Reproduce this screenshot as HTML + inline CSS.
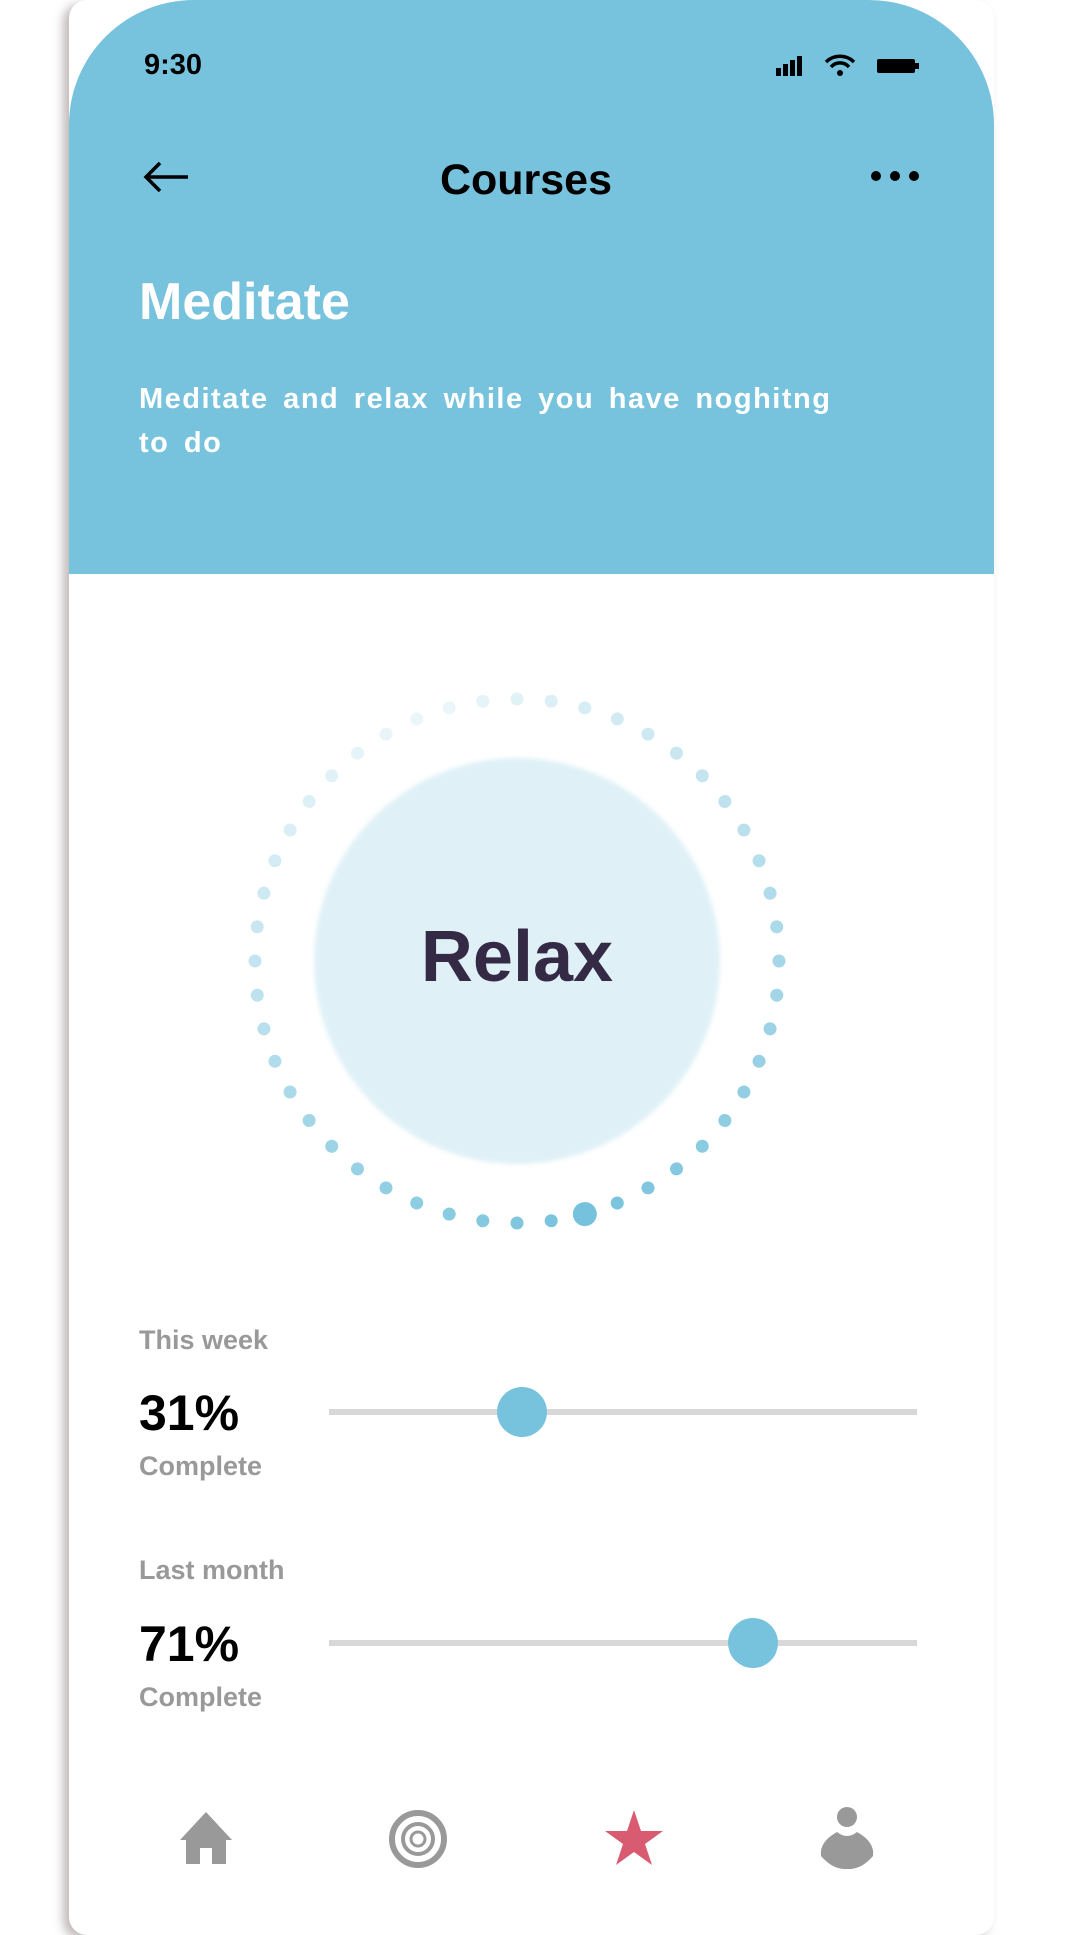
<!DOCTYPE html>
<html><head><meta charset="utf-8"><style>
*{margin:0;padding:0;box-sizing:border-box}
body{width:1081px;height:1921px;background:#fff;position:relative;overflow:hidden;font-family:"Liberation Sans",sans-serif;font-weight:bold}
.card{position:absolute;left:69px;top:0;width:925px;height:1935px;background:#fff;border-radius:18px;box-shadow:-6px 4px 10px rgba(120,100,100,.45)}
.hdr{position:absolute;left:69px;top:0;width:925px;height:574px;background:#77c2dc;border-radius:125px 125px 0 0}
.t{position:absolute;white-space:nowrap}
</style></head><body>
<div class="card"></div>
<div class="hdr"></div>
<div class="t" style="left:144px;top:49px;font-size:29px;color:#000">9:30</div>
<svg class="t" style="left:776px;top:54px" width="145" height="24" viewBox="0 0 145 24">
<rect x="0" y="14" width="5" height="8" fill="#000"/><rect x="7" y="10" width="5" height="12" fill="#000"/><rect x="14" y="6" width="5" height="16" fill="#000"/><rect x="21" y="2" width="5" height="20" fill="#000"/>
<path d="M50 8a20 20 0 0 1 28 0" stroke="#000" stroke-width="3.5" fill="none"/><path d="M55 13a12 12 0 0 1 18 0" stroke="#000" stroke-width="3.5" fill="none"/><circle cx="64" cy="19" r="3" fill="#000"/>
<rect x="101" y="5" width="38" height="14" rx="2" fill="#000"/><rect x="139" y="9" width="4" height="6" fill="#000"/>
</svg>
<svg class="t" style="left:142px;top:160px" width="50" height="34" viewBox="0 0 50 34"><path d="M46 17H4M18 3L4 17l14 14" stroke="#000" stroke-width="3.5" fill="none"/></svg>
<div class="t" style="left:0;width:1052px;text-align:center;top:156px;font-size:43px;color:#000">Courses</div>
<svg class="t" style="left:870px;top:170px" width="50" height="12"><circle cx="6" cy="6" r="5" fill="#000"/><circle cx="25" cy="6" r="5" fill="#000"/><circle cx="44" cy="6" r="5" fill="#000"/></svg>
<div class="t" style="left:139px;top:272px;font-size:52px;color:#fff">Meditate</div>
<div class="t" style="left:139px;top:377px;font-size:29px;line-height:44px;color:#fff;letter-spacing:1.5px;word-spacing:5px">Meditate and relax while you have noghitng<br>to do</div>
<div class="t" style="left:314px;top:758px;width:406px;height:406px;border-radius:50%;background:#dff1f7;filter:blur(2px)"></div>
<svg class="t" style="left:237px;top:681px" width="560" height="560" viewBox="-280 -280 560 560">
<g fill="#76c2dc">
<circle cx="262" cy="0" r="6.5" opacity=".65"/>
<circle cx="262" cy="0" r="6.5" opacity=".68" transform="rotate(7.5)"/>
<circle cx="262" cy="0" r="6.5" opacity=".72" transform="rotate(15)"/>
<circle cx="262" cy="0" r="6.5" opacity=".75" transform="rotate(22.5)"/>
<circle cx="262" cy="0" r="6.5" opacity=".79" transform="rotate(30)"/>
<circle cx="262" cy="0" r="6.5" opacity=".82" transform="rotate(37.5)"/>
<circle cx="262" cy="0" r="6.5" opacity=".86" transform="rotate(45)"/>
<circle cx="262" cy="0" r="6.5" opacity=".89" transform="rotate(52.5)"/>
<circle cx="262" cy="0" r="6.5" opacity=".93" transform="rotate(60)"/>
<circle cx="262" cy="0" r="6.5" opacity=".96" transform="rotate(67.5)"/>
<circle cx="262" cy="0" r="12" opacity="1" transform="rotate(75)"/>
<circle cx="262" cy="0" r="6.5" opacity=".96" transform="rotate(82.5)"/>
<circle cx="262" cy="0" r="6.5" opacity=".93" transform="rotate(90)"/>
<circle cx="262" cy="0" r="6.5" opacity=".89" transform="rotate(97.5)"/>
<circle cx="262" cy="0" r="6.5" opacity=".86" transform="rotate(105)"/>
<circle cx="262" cy="0" r="6.5" opacity=".82" transform="rotate(112.5)"/>
<circle cx="262" cy="0" r="6.5" opacity=".79" transform="rotate(120)"/>
<circle cx="262" cy="0" r="6.5" opacity=".75" transform="rotate(127.5)"/>
<circle cx="262" cy="0" r="6.5" opacity=".72" transform="rotate(135)"/>
<circle cx="262" cy="0" r="6.5" opacity=".68" transform="rotate(142.5)"/>
<circle cx="262" cy="0" r="6.5" opacity=".62" transform="rotate(150)"/>
<circle cx="262" cy="0" r="6.5" opacity=".57" transform="rotate(157.5)"/>
<circle cx="262" cy="0" r="6.5" opacity=".52" transform="rotate(165)"/>
<circle cx="262" cy="0" r="6.5" opacity=".48" transform="rotate(172.5)"/>
<circle cx="262" cy="0" r="6.5" opacity=".44" transform="rotate(180)"/>
<circle cx="262" cy="0" r="6.5" opacity=".40" transform="rotate(187.5)"/>
<circle cx="262" cy="0" r="6.5" opacity=".36" transform="rotate(195)"/>
<circle cx="262" cy="0" r="6.5" opacity=".32" transform="rotate(202.5)"/>
<circle cx="262" cy="0" r="6.5" opacity=".28" transform="rotate(210)"/>
<circle cx="262" cy="0" r="6.5" opacity=".25" transform="rotate(217.5)"/>
<circle cx="262" cy="0" r="6.5" opacity=".22" transform="rotate(225)"/>
<circle cx="262" cy="0" r="6.5" opacity=".19" transform="rotate(232.5)"/>
<circle cx="262" cy="0" r="6.5" opacity=".16" transform="rotate(240)"/>
<circle cx="262" cy="0" r="6.5" opacity=".15" transform="rotate(247.5)"/>
<circle cx="262" cy="0" r="6.5" opacity=".15" transform="rotate(255)"/>
<circle cx="262" cy="0" r="6.5" opacity=".19" transform="rotate(262.5)"/>
<circle cx="262" cy="0" r="6.5" opacity=".22" transform="rotate(270)"/>
<circle cx="262" cy="0" r="6.5" opacity=".26" transform="rotate(277.5)"/>
<circle cx="262" cy="0" r="6.5" opacity=".29" transform="rotate(285)"/>
<circle cx="262" cy="0" r="6.5" opacity=".33" transform="rotate(292.5)"/>
<circle cx="262" cy="0" r="6.5" opacity=".36" transform="rotate(300)"/>
<circle cx="262" cy="0" r="6.5" opacity=".40" transform="rotate(307.5)"/>
<circle cx="262" cy="0" r="6.5" opacity=".43" transform="rotate(315)"/>
<circle cx="262" cy="0" r="6.5" opacity=".47" transform="rotate(322.5)"/>
<circle cx="262" cy="0" r="6.5" opacity=".50" transform="rotate(330)"/>
<circle cx="262" cy="0" r="6.5" opacity=".54" transform="rotate(337.5)"/>
<circle cx="262" cy="0" r="6.5" opacity=".57" transform="rotate(345)"/>
<circle cx="262" cy="0" r="6.5" opacity=".61" transform="rotate(352.5)"/>
</g></svg>
<div class="t" style="left:0;width:1034px;text-align:center;top:916px;font-size:72px;color:#352a45">Relax</div>

<div class="t" style="left:139px;top:1325px;font-size:27px;color:#999">This week</div>
<div class="t" style="left:139px;top:1384px;font-size:50px;color:#000">31%</div>
<div class="t" style="left:139px;top:1451px;font-size:27px;color:#999">Complete</div>
<div class="t" style="left:329px;top:1409px;width:588px;height:6px;background:#d8d8d8"></div>
<div class="t" style="left:497px;top:1387px;width:50px;height:50px;border-radius:50%;background:#77c2dc"></div>

<div class="t" style="left:139px;top:1555px;font-size:27px;color:#999">Last month</div>
<div class="t" style="left:139px;top:1615px;font-size:50px;color:#000">71%</div>
<div class="t" style="left:139px;top:1682px;font-size:27px;color:#999">Complete</div>
<div class="t" style="left:329px;top:1640px;width:588px;height:6px;background:#d8d8d8"></div>
<div class="t" style="left:728px;top:1618px;width:50px;height:50px;border-radius:50%;background:#77c2dc"></div>

<svg class="t" style="left:178px;top:1810px" width="56" height="56" viewBox="0 0 56 56"><path d="M28 2L2 30h6v24h14V38h12v16h14V30h6z" fill="#999"/></svg>
<svg class="t" style="left:389px;top:1810px" width="58" height="58" viewBox="0 0 58 58"><circle cx="29" cy="29" r="26" fill="none" stroke="#999" stroke-width="6"/><circle cx="29" cy="29" r="15" fill="none" stroke="#999" stroke-width="4"/><circle cx="29" cy="29" r="7" fill="none" stroke="#999" stroke-width="3"/></svg>
<svg class="t" style="left:604px;top:1808px" width="60" height="60" viewBox="0 0 60 60"><path d="M30 2L37 23H59L41 36L48 57L30 44L12 57L19 36L1 23H23Z" fill="#d95b72"/></svg>
<svg class="t" style="left:817px;top:1806px" width="60" height="64" viewBox="0 0 60 64"><circle cx="30" cy="11" r="10" fill="#999"/><path d="M20 26Q30 34 40 26Q58 36 56 50Q44 64 30 63Q16 64 4 50Q2 36 20 26z" fill="#999"/></svg>
</body></html>
